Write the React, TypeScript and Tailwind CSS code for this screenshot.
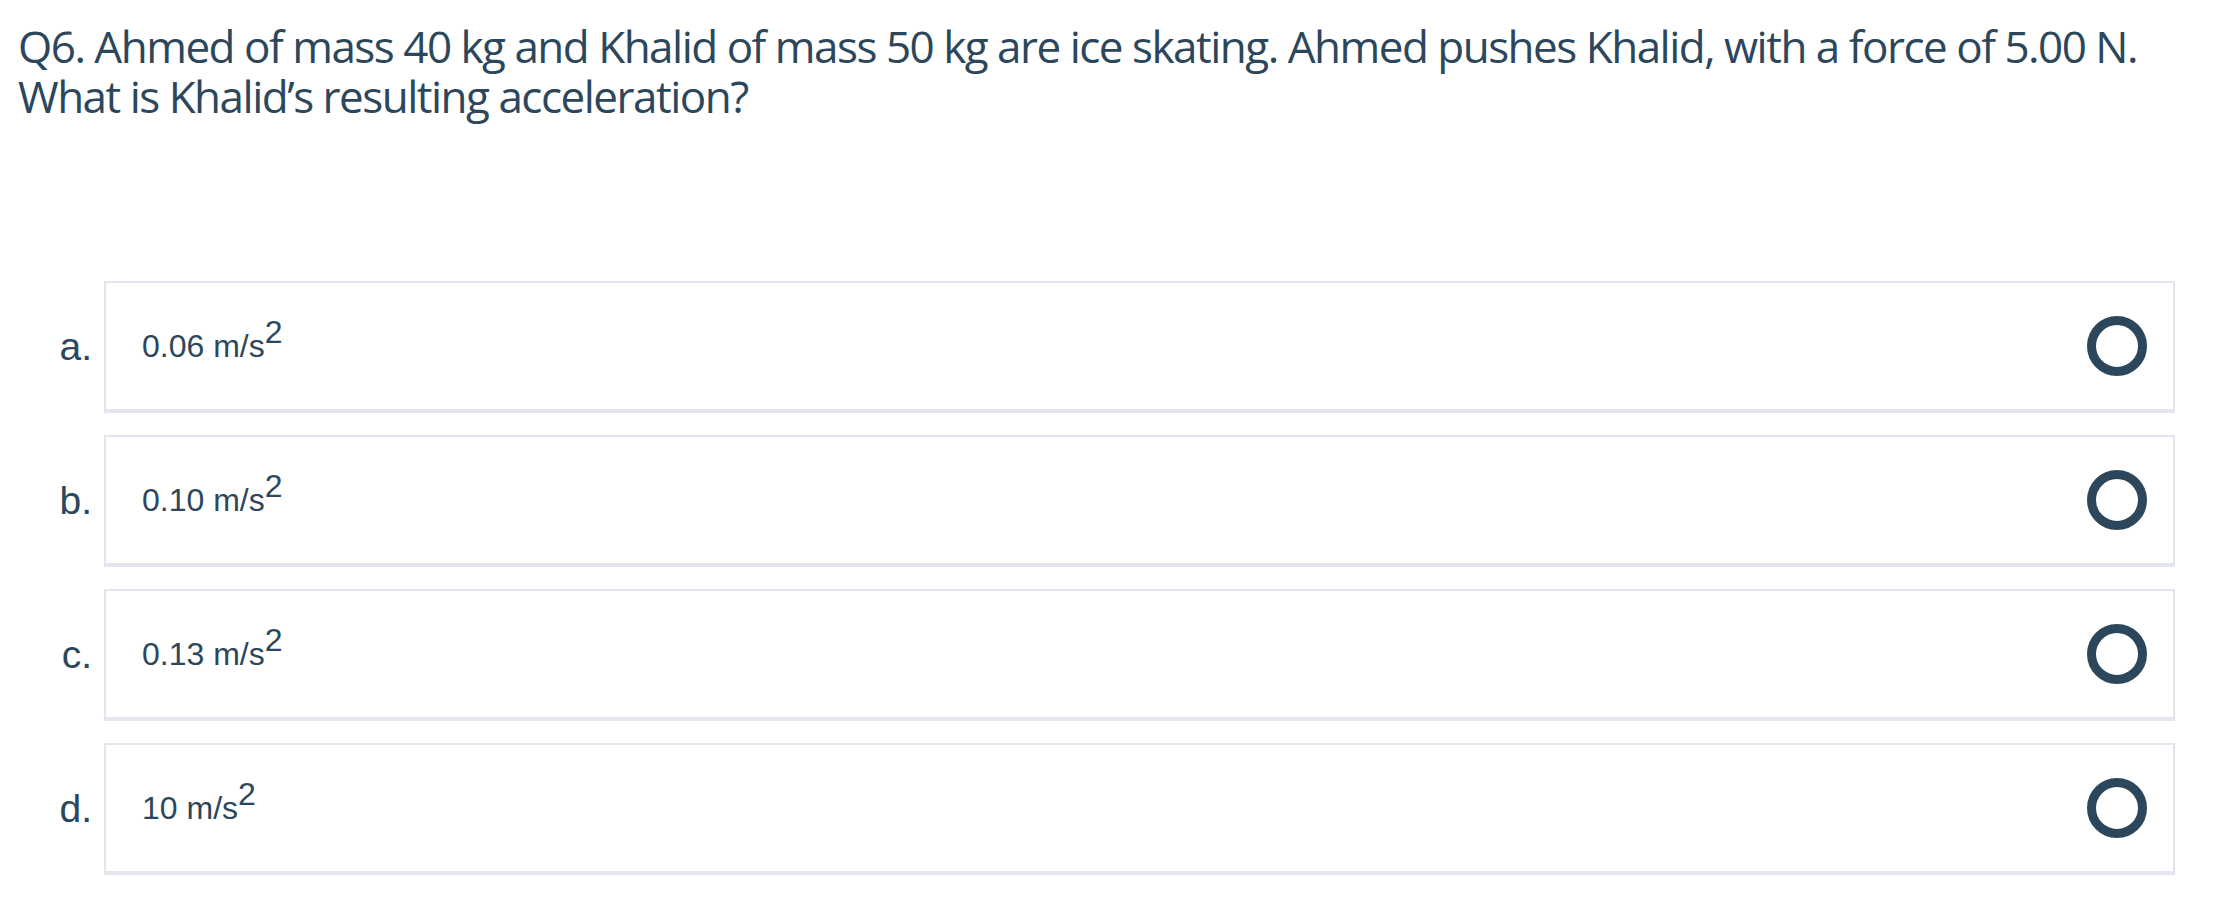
const options = [
  { key: "a.", value: "0.06 m/s" },
  { key: "b.", value: "0.10 m/s" },
  { key: "c.", value: "0.13 m/s" },
  { key: "d.", value: "10 m/s" },
];

function Radio() {
  return <span className="block h-[60px] w-[60px] rounded-full border-[9px] border-[#2c475c] bg-white" />;
}

export default function App() {
  return (
    <div className="min-h-screen bg-white px-[18px] pt-[21px] text-[#2c475c]">
      <h2 className="whitespace-nowrap font-['Open_Sans',sans-serif] text-[44px] leading-[50px] font-normal tracking-[-1.5px]">
        Q6. Ahmed of mass 40 kg and Khalid of mass 50 kg are ice skating. Ahmed pushes Khalid, with a force of 5.00 N.
        <br />
        What is Khalid’s resulting acceleration?
      </h2>

      <div className="mt-[160px] flex w-[2157px] flex-col gap-[22px] font-['Liberation_Sans',Arial,sans-serif]">
        {options.map((o) => (
          <div key={o.key} className="flex items-center">
            <span className="w-[74px] text-right text-[39px]">{o.key}</span>
            <label className="ml-[12px] flex h-[132px] flex-1 items-center justify-between border-2 border-b-4 border-[#e3e6ef] pl-[36px] pr-[26px]">
              <span className="text-[32px]">
                {o.value}
                <sup className="top-[-0.45em] text-[1em]">2</sup>
              </span>
              <Radio />
            </label>
          </div>
        ))}
      </div>
    </div>
  );
}
